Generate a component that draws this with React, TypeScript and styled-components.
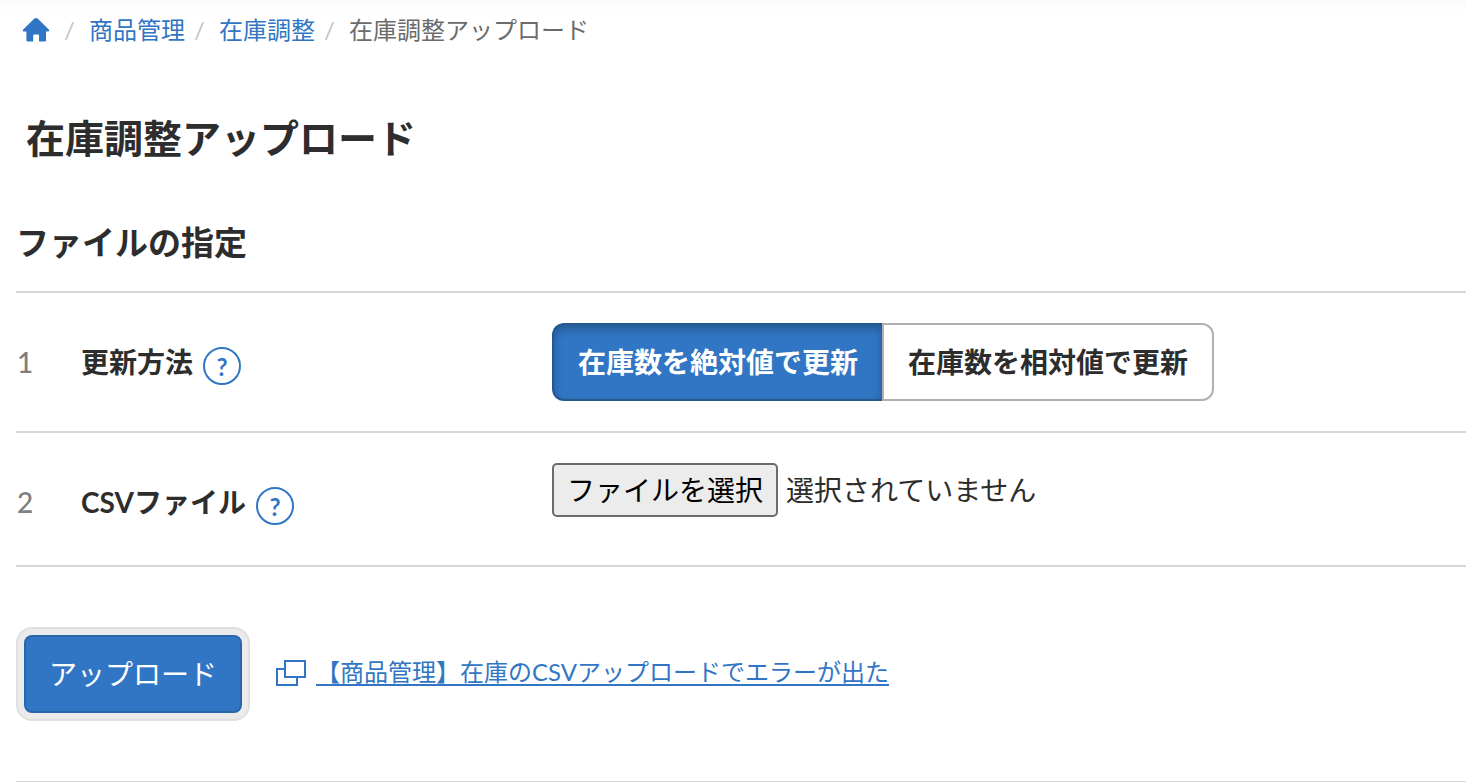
import { useState } from "react";
import type { ChangeEvent } from "react";
import styled, { createGlobalStyle, css } from "styled-components";

const GlobalStyle = createGlobalStyle`
  *, *::before, *::after { box-sizing: border-box; }
  body {
    margin: 0;
    background: #fff;
    color: #2d2d2d;
    font-family: Lato, "Noto Sans CJK JP", sans-serif;
    font-size: 28px;
    line-height: 38px;
  }
  button, input { font: inherit; }
`;

const blue = "#3176c4";
const rule = "#d7d7d7";

const Page = styled.div`
  padding-left: 16px;
  background: linear-gradient(#fafafa, #fff 12px);
`;

const Breadcrumb = styled.nav`
  padding: 12px 6px 0;
  font-size: 24px;
  line-height: 36px;
`;

const Crumbs = styled.ol`
  display: flex;
  align-items: center;
  margin: 0;
  padding: 0;
  list-style: none;
`;

const Crumb = styled.li`
  display: flex;
  align-items: center;
  color: #6b6b6b;

  & + &::before {
    content: "/";
    width: 34px;
    padding-right: 5px;
    text-align: center;
    color: #c4c4c4;
  }
`;

const CrumbLink = styled.a`
  display: flex;
  color: ${blue};
  text-decoration: none;
`;

const HomeLink = styled(CrumbLink)`
  padding-right: 5px;
`;

const PageTitle = styled.h1`
  margin: 60px 10px 0;
  font-size: 39px;
  line-height: 60px;
  font-weight: 700;
`;

const SectionTitle = styled.h2`
  margin: 50px 0 0;
  padding-bottom: 25px;
  border-bottom: 2px solid ${rule};
  font-size: 33px;
  line-height: 48px;
  font-weight: 700;
`;

const Row = styled.div`
  display: grid;
  grid-template-columns: 65px 471px 1fr;
  align-items: start;
  padding: 30px 0;
  border-bottom: 2px solid ${rule};
`;

const RowNumber = styled.span`
  padding: 20px 0 0 1px;
  color: #7f7f7f;
  font-weight: 500;
`;

const RowLabel = styled.div`
  display: flex;
  align-items: flex-start;
  gap: 10px;
  padding: 20px 0 10px;
  font-weight: 700;
`;

const HelpButton = styled.button`
  width: 38px;
  height: 38px;
  margin: 4px 0 0;
  padding: 2px 0 0;
  border: 2px solid ${blue};
  border-radius: 50%;
  background: none;
  color: ${blue};
  font-size: 24px;
  line-height: 32px;
  font-weight: 700;
`;

const Segments = styled.div`
  display: flex;
`;

const HiddenInput = styled.input`
  position: absolute;
  width: 1px;
  height: 1px;
  margin: 0;
  opacity: 0;
`;

const Segment = styled.label<{ $active: boolean }>`
  height: 78px;
  padding: 18px 24px;
  border: 2px solid #b0b0b0;
  font-weight: 700;
  white-space: nowrap;
  cursor: pointer;

  &:first-child {
    border-right-width: 0;
    border-radius: 12px 0 0 12px;
  }
  &:last-child {
    border-left-width: 2px;
    border-radius: 0 12px 12px 0;
  }
  ${({ $active }) =>
    $active &&
    css`
      border-color: #25588f;
      background: ${blue};
      color: #fff;
      box-shadow: inset 0 4px 10px rgba(0, 0, 0, 0.25);
    `}
`;

const FilePicker = styled.div`
  display: flex;
  align-items: center;
  gap: 8px;
`;

const FileButton = styled.label`
  height: 54px;
  padding: 6px 13px;
  border: 2px solid #6b6b6b;
  border-radius: 5px;
  background: #ececec;
  color: #000;
  white-space: nowrap;
  cursor: pointer;
`;

const Actions = styled.div`
  display: flex;
  align-items: center;
  gap: 26px;
  padding: 60px 0;
  border-bottom: 1px solid ${rule};
`;

const UploadFrame = styled.div`
  padding: 6px;
  border: 2px solid #e0e0e0;
  border-radius: 16px;
  background: #ebebeb;
`;

const UploadButton = styled.button`
  display: block;
  height: 78px;
  padding: 0 23px;
  border: 2px solid #2866ab;
  border-radius: 8px;
  background: ${blue};
  color: #fff;
`;

const HelpLink = styled.a`
  display: flex;
  align-items: center;
  gap: 10px;
  padding-bottom: 2px;
  color: ${blue};
  font-size: 24px;
  text-decoration: none;
`;

const HelpLinkText = styled.span`
  padding-bottom: 2px;
  text-decoration: underline;
  text-decoration-thickness: 2px;
  text-underline-offset: 3px;
`;

const methods = [
  { value: "absolute", label: "在庫数を絶対値で更新" },
  { value: "relative", label: "在庫数を相対値で更新" },
];

const HomeIcon = () => (
  <svg width="28" height="24" viewBox="0 0 28 24" aria-hidden="true">
    <path
      d="M12.4 0.6Q14 -0.6 15.6 0.6L26.8 11.4Q28 13.2 26.2 13.6H24V22.6Q24 23.6 23 23.6H17V17.4Q17 16.6 16.2 16.6H12Q11.2 16.6 11.2 17.4V23.6H5.4Q4.4 23.6 4.4 22.6V13.6H1.6Q0 13.2 1.2 11.4Z"
      fill={blue}
    />
  </svg>
);

const WindowsIcon = () => (
  <svg width="30" height="26" viewBox="0 0 30 26" fill="none" stroke={blue} strokeWidth="2" aria-hidden="true">
    <path d="M8 9H1V25H21V18" />
    <path d="M9 1H29V17H9Z" />
  </svg>
);

export default function App() {
  const [method, setMethod] = useState("absolute");
  const [fileName, setFileName] = useState("");

  const onFile = (event: ChangeEvent<HTMLInputElement>) =>
    setFileName(event.target.files?.[0]?.name ?? "");

  return (
    <>
      <GlobalStyle />
      <Page>
        <Breadcrumb>
          <Crumbs>
            <Crumb>
              <HomeLink href="#home">
                <HomeIcon />
              </HomeLink>
            </Crumb>
            <Crumb>
              <CrumbLink href="#products">商品管理</CrumbLink>
            </Crumb>
            <Crumb>
              <CrumbLink href="#stock">在庫調整</CrumbLink>
            </Crumb>
            <Crumb>在庫調整アップロード</Crumb>
          </Crumbs>
        </Breadcrumb>
        <main>
          <PageTitle>在庫調整アップロード</PageTitle>
          <SectionTitle>ファイルの指定</SectionTitle>
          <Row>
            <RowNumber>1</RowNumber>
            <RowLabel>
              <span id="method-label">更新方法</span>
              <HelpButton type="button">?</HelpButton>
            </RowLabel>
            <Segments role="radiogroup" aria-labelledby="method-label">
              {methods.map(({ value, label }) => (
                <Segment key={value} $active={method === value}>
                  <HiddenInput
                    type="radio"
                    name="method"
                    value={value}
                    checked={method === value}
                    onChange={() => setMethod(value)}
                  />
                  {label}
                </Segment>
              ))}
            </Segments>
          </Row>
          <Row>
            <RowNumber>2</RowNumber>
            <RowLabel>
              <label htmlFor="csv-file">CSVファイル</label>
              <HelpButton type="button">?</HelpButton>
            </RowLabel>
            <FilePicker>
              <FileButton>
                <HiddenInput id="csv-file" type="file" accept=".csv" onChange={onFile} />
                ファイルを選択
              </FileButton>
              <span>{fileName || "選択されていません"}</span>
            </FilePicker>
          </Row>
          <Actions>
            <UploadFrame>
              <UploadButton type="button">アップロード</UploadButton>
            </UploadFrame>
            <HelpLink href="#csv-error">
              <WindowsIcon />
              <HelpLinkText>【商品管理】在庫のCSVアップロードでエラーが出た</HelpLinkText>
            </HelpLink>
          </Actions>
        </main>
      </Page>
    </>
  );
}
